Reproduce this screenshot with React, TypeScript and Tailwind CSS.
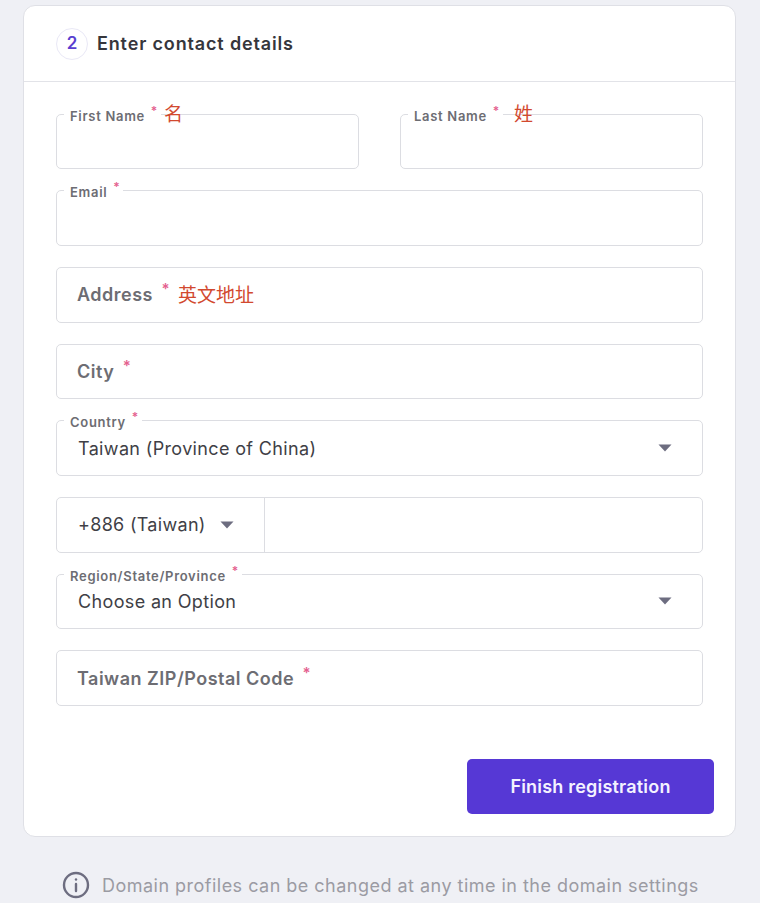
const font = "font-['Inter','Noto_Sans_CJK_SC',sans-serif]";

function Caret() {
  return (
    <svg width="14" height="8" viewBox="0 0 14 8" className="shrink-0">
      <path d="M0.5 0.5h13L7 7.5z" fill="#6d6d80" />
    </svg>
  );
}

function Star({ className }: { className: string }) {
  return <span className={`absolute leading-none text-[#e4618f] ${className}`}>*</span>;
}

// small label sitting on the top border
function Notched({ label, note, noteLeft, children }: { label: string; note?: string; noteLeft?: string; children?: React.ReactNode }) {
  return (
    <div className="relative flex h-[55.7px] items-center rounded-[5px] border border-[#dcdde2] bg-white pl-[21px] pr-[30px]">
      <div className="absolute left-[7px] top-[-7px] flex items-start bg-white pl-[6px] pr-[16px]">
        <span className="relative text-[13px] leading-[16px] font-semibold tracking-[0.7px] text-[#6d6d73]">
          {label}
          <Star className="right-[-13px] top-[-3px] text-[12px]" />
        </span>
      </div>
      {note && (
        <span className={`absolute top-[-12px] text-[19px] leading-[24px] text-[#d2492f] ${noteLeft}`}>
          {note}
        </span>
      )}
      {children}
    </div>
  );
}

function Floating({ label, note }: { label: string; note?: string }) {
  return (
    <div className="flex h-[55.7px] items-center rounded-[5px] border border-[#dcdde2] bg-white pl-[20px]">
      <span className="relative text-[18px] font-semibold tracking-[0.5px] text-[#6d6d73]">
        {label}
        <Star className="right-[-17px] top-[0px] text-[15px]" />
      </span>
      {note && <span className="ml-[25px] mt-[3px] text-[19px] text-[#d2492f]">{note}</span>}
    </div>
  );
}

function SelectField({ label, value }: { label: string; value: string }) {
  return (
    <Notched label={label}>
      <span className="mt-[1px] flex-1 text-[18px] tracking-[0.35px] text-[#3f3f46]">{value}</span>
      <Caret />
    </Notched>
  );
}

export default function App() {
  return (
    <div className={`${font} h-[903px] overflow-hidden bg-[#eff0f5] pl-[23px] pr-[24px] pt-[5px]`}>
      <div className="h-[832px] rounded-[12px] border border-[#dfe0e6] bg-white">
        {/* Step header */}
        <div className="flex h-[76px] items-center gap-[9px] border-b border-[#e2e3e8] pl-[32px]">
          <span className="flex h-[32px] w-[32px] items-center justify-center rounded-full border border-[#e9e8f6] text-[17px] font-semibold text-[#5a3fd0]">
            2
          </span>
          <h2 className="text-[18px] font-semibold tracking-[0.85px] text-[#36363c]">Enter contact details</h2>
        </div>

        <div className="flex flex-col gap-[21px] px-[32px] pt-[31.5px]">
          <div className="grid grid-cols-2 gap-[41px]">
            <Notched label="First Name" note="名" noteLeft="left-[107px]" />
            <Notched label="Last Name" note="姓" noteLeft="left-[113px]" />
          </div>
          <Notched label="Email" />
          <Floating label="Address" note="英文地址" />
          <Floating label="City" />
          <SelectField label="Country" value="Taiwan (Province of China)" />

          <div className="flex h-[55.7px] items-center rounded-[5px] border border-[#dcdde2]">
            <div className="flex h-full w-[208px] items-center gap-[14px] border-r border-[#dcdde2] pl-[21px]">
              <span className="text-[18px] tracking-[0.3px] text-[#3f3f46]">+886 (Taiwan)</span>
              <Caret />
            </div>
          </div>

          <SelectField label="Region/State/Province" value="Choose an Option" />
          <Floating label="Taiwan ZIP/Postal Code" />
        </div>

        <div className="mt-[53px] flex justify-end pr-[21px]">
          <button className="h-[55px] w-[247px] rounded-[5px] bg-[#5638d5] text-[18px] font-semibold tracking-[0.2px] text-[#f4f2ff]">
            Finish registration
          </button>
        </div>
      </div>

      <div className="mt-[34px] flex items-center gap-[12px] pl-[39px]">
        <svg width="28" height="28" viewBox="0 0 28 28" fill="none" stroke="#6d6d80" strokeWidth="2.4" strokeLinecap="round">
          <circle cx="14" cy="14" r="12" />
          <path d="M14 13v7" />
          <path d="M14 8.4v.2" />
        </svg>
        <span className="text-[18px] tracking-[0.48px] text-[#9b9ba3]">Domain profiles can be changed at any time in the domain settings</span>
      </div>
    </div>
  );
}
